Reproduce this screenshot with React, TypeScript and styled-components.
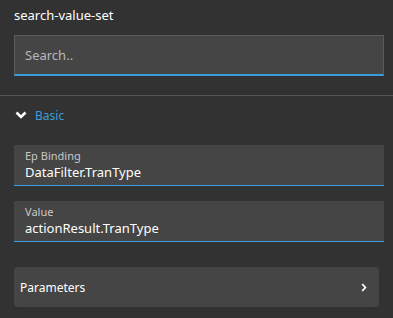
import React from 'react';
import styled, { createGlobalStyle } from 'styled-components';

const GlobalStyle = createGlobalStyle`
  html, body {
    margin: 0;
    padding: 0;
    background: #323232;
  }
  body {
    font-family: 'Noto Sans', 'Open Sans', sans-serif;
  }
`;

const ChevronDown = () => (
  <svg width="12" height="8" viewBox="0 0 12 8">
    <path d="M1.5 1.5 L6 6 L10.5 1.5" fill="none" stroke="#ffffff" strokeWidth="2.6" />
  </svg>
);

const ChevronRight = () => (
  <svg width="6" height="9" viewBox="0 0 6 9">
    <path d="M1.2 1 L4.4 4.5 L1.2 8" fill="none" stroke="#ffffff" strokeWidth="1.8" />
  </svg>
);

const Field = ({ label, value }: { label: string; value: string }) => (
  <FieldBox>
    <FieldLabel>{label}</FieldLabel>
    <FieldValue>{value}</FieldValue>
  </FieldBox>
);

const App = () => {
  return (
    <Panel>
      <GlobalStyle />
      <Header>
        <Title>search-value-set</Title>
        <SearchInput placeholder="Search.." />
      </Header>
      <Section>
        <SectionToggle>
          <ChevronDown />
          <span>Basic</span>
        </SectionToggle>
        <Fields>
          <Field label="Ep Binding" value="DataFilter.TranType" />
          <Field label="Value" value="actionResult.TranType" />
        </Fields>
        <LinkCard>
          <span>Parameters</span>
          <ChevronRight />
        </LinkCard>
      </Section>
    </Panel>
  );
};

const Panel = styled.div`
  width: 393px;
  height: 318px;
  background: #323232;
  color: #fff;
  overflow: hidden;
`;

const Header = styled.div`
  padding: 6px 9px 19px 14px;
  border-bottom: 1px solid #555;
`;

const Title = styled.div`
  font-size: 13px;
  line-height: 18px;
  color: #fff;
  margin-bottom: 11px;
`;

const SearchInput = styled.input`
  display: block;
  box-sizing: border-box;
  width: 370px;
  height: 41px;
  padding: 0 10px;
  background: #454545;
  border: 1px solid #5c5c5c;
  border-bottom: 2px solid #3b9ddb;
  outline: none;
  font-family: 'Noto Sans', sans-serif;
  font-size: 13px;
  color: #fff;
  &::placeholder {
    color: #b8b8b8;
  }
`;

const Section = styled.div`
  padding: 9px 9px 0 14px;
`;

const SectionToggle = styled.div`
  display: flex;
  align-items: center;
  gap: 8px;
  height: 20px;
  padding-left: 1px;
  color: #3b9ddb;
  font-size: 12px;
  margin-bottom: 20px;
`;

const Fields = styled.div`
  display: flex;
  flex-direction: column;
  gap: 15px;
  margin-bottom: 25px;
`;

const FieldBox = styled.div`
  box-sizing: border-box;
  width: 370px;
  height: 41px;
  padding: 3px 11px 0;
  background: #454545;
  border-bottom: 1px solid #3b9ddb;
`;

const FieldLabel = styled.div`
  font-size: 11px;
  line-height: 15px;
  color: #c8c8c8;
`;

const FieldValue = styled.div`
  font-size: 13px;
  line-height: 18px;
  color: #fff;
`;

const LinkCard = styled.div`
  box-sizing: border-box;
  width: 365px;
  height: 40px;
  display: flex;
  align-items: center;
  justify-content: space-between;
  padding: 0 12px 0 6px;
  background: #454545;
  border-radius: 4px;
  font-size: 12px;
  color: #fff;
`;

export default App;
